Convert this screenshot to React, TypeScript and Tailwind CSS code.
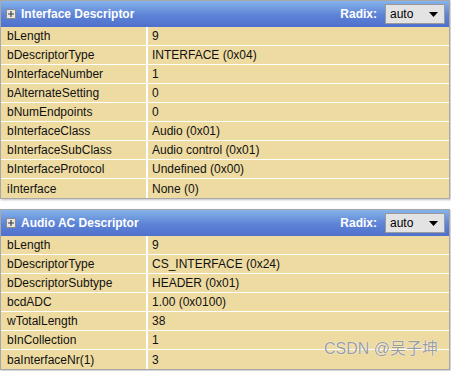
import React from "react";

type Row = [string, string];

const iface: Row[] = [
  ["bLength", "9"],
  ["bDescriptorType", "INTERFACE (0x04)"],
  ["bInterfaceNumber", "1"],
  ["bAlternateSetting", "0"],
  ["bNumEndpoints", "0"],
  ["bInterfaceClass", "Audio (0x01)"],
  ["bInterfaceSubClass", "Audio control (0x01)"],
  ["bInterfaceProtocol", "Undefined (0x00)"],
  ["iInterface", "None (0)"],
];

const ac: Row[] = [
  ["bLength", "9"],
  ["bDescriptorType", "CS_INTERFACE (0x24)"],
  ["bDescriptorSubtype", "HEADER (0x01)"],
  ["bcdADC", "1.00 (0x0100)"],
  ["wTotalLength", "38"],
  ["bInCollection", "1"],
  ["baInterfaceNr(1)", "3"],
];

function Plus() {
  return (
    <svg width="10" height="10" viewBox="0 0 10 10" className="shrink-0">
      <rect x="0.5" y="0.5" width="9" height="9" fill="#e6e6e6" stroke="#8a8a8a" />
      <path d="M2 5h6M5 2v6" stroke="#404040" strokeWidth="1.2" />
    </svg>
  );
}

function Panel({ title, rows }: { title: string; rows: Row[] }) {
  return (
    <div className="w-[450px] border border-[#a8a8a8] shadow-[1px_1px_2px_rgba(0,0,0,0.25)]">
      <div className="h-[26px] flex items-center pl-[5px] pr-[4px] bg-[linear-gradient(to_bottom,#85b3ea,#5d83d6_55%,#5070cc)]">
        <Plus />
        <span className="ml-[5px] text-white font-bold text-[12px] leading-none">{title}</span>
        <span className="ml-auto text-white font-bold text-[12px] leading-none">Radix:</span>
        <div className="ml-[8px] w-[60px] h-[20px] bg-[#e3e3e3] border border-[#9a9a9a] flex items-center pl-[4px] pr-[6px]">
          <span className="text-[12px] text-black leading-none">auto</span>
          <svg width="9" height="5" viewBox="0 0 9 5" className="ml-auto">
            <path d="M0 0h9L4.5 5z" fill="#000" />
          </svg>
        </div>
      </div>
      {rows.map(([k, v], i) => (
        <div
          key={i}
          className={`flex h-[19px] bg-[#eedba1] text-[12px] text-[#111] leading-none ${
            i < rows.length - 1 ? "border-b border-white" : ""
          }`}
        >
          <div className="w-[147px] border-r-2 border-white flex items-center pl-[6px]">{k}</div>
          <div className="flex-1 flex items-center pl-[4px]">{v}</div>
        </div>
      ))}
    </div>
  );
}

export default function App() {
  return (
    <div className="w-[451px] h-[371px] bg-white overflow-hidden font-['Liberation_Sans',Arial,sans-serif] relative">
      <Panel title="Interface Descriptor" rows={iface} />
      <div className="h-[10px]" />
      <Panel title="Audio AC Descriptor" rows={ac} />
      <div className="absolute right-[13px] bottom-[14px] text-[16px] leading-none text-[#9c9c9c] font-['Liberation_Sans','Noto_Sans_CJK_SC',sans-serif] [text-shadow:0_0_1px_#fff,0_0_1px_#fff]">
        CSDN @吴子坤
      </div>
    </div>
  );
}
